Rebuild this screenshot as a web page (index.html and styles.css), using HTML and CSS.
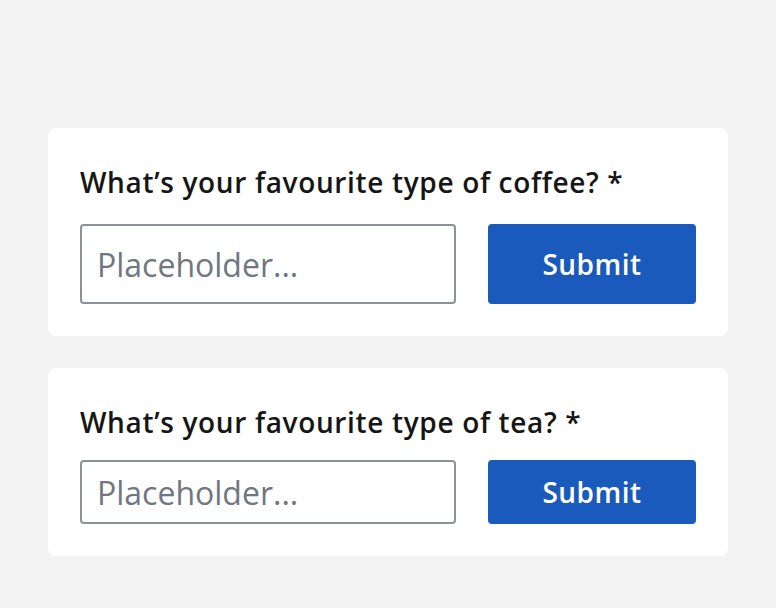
FILE: index.html
```html
<!DOCTYPE html>
<html lang="en">
<head>
<meta charset="utf-8">
<title>Forms</title>
<link rel="stylesheet" href="styles.css">
</head>
<body>
<main class="page">
  <form class="card card--large">
    <label class="field-label" for="coffee">What’s your favourite type of coffee? *</label>
    <div class="field-row">
      <input class="text-input" id="coffee" type="text" placeholder="Placeholder...">
      <button class="btn" type="button">Submit</button>
    </div>
  </form>
  <form class="card card--medium">
    <label class="field-label" for="tea">What’s your favourite type of tea? *</label>
    <div class="field-row">
      <input class="text-input" id="tea" type="text" placeholder="Placeholder...">
      <button class="btn" type="button">Submit</button>
    </div>
  </form>
</main>
</body>
</html>
```
FILE: styles.css
```css
html, body {
  margin: 0;
  padding: 0;
  background: #f3f3f3;
  font-family: "Open Sans", "Noto Sans", sans-serif;
}
.page {
  padding: 128px 48px 0;
  display: flex;
  flex-direction: column;
  gap: 32px;
}
.card {
  background: #ffffff;
  border-radius: 8px;
  padding: 36px 32px 32px;
  display: flex;
  flex-direction: column;
}
.field-label {
  font-size: 28px;
  line-height: 36px;
  font-weight: 600;
  color: #161616;
  letter-spacing: 0.65px;
}
.card--large .field-label { margin-bottom: 24px; }
.card--medium .field-label { margin-bottom: 20px; }
.field-row {
  display: flex;
  gap: 32px;
}
.text-input {
  box-sizing: border-box;
  width: 376px;
  border: 2px solid #8c9099;
  border-radius: 4px;
  padding: 0 15px;
  font-family: inherit;
  font-size: 32px;
  color: #161616;
  background: #fff;
  outline: none;
}
.text-input::placeholder { color: #6f7782; }
.btn {
  box-sizing: border-box;
  width: 208px;
  border: none;
  border-radius: 4px;
  background: #1a5abd;
  color: #ffffff;
  font-family: inherit;
  font-size: 28px;
  font-weight: 600;
  letter-spacing: 0.5px;
  cursor: pointer;
}
.card--large .text-input, .card--large .btn { height: 80px; }
.card--medium .text-input, .card--medium .btn { height: 64px; }
```
